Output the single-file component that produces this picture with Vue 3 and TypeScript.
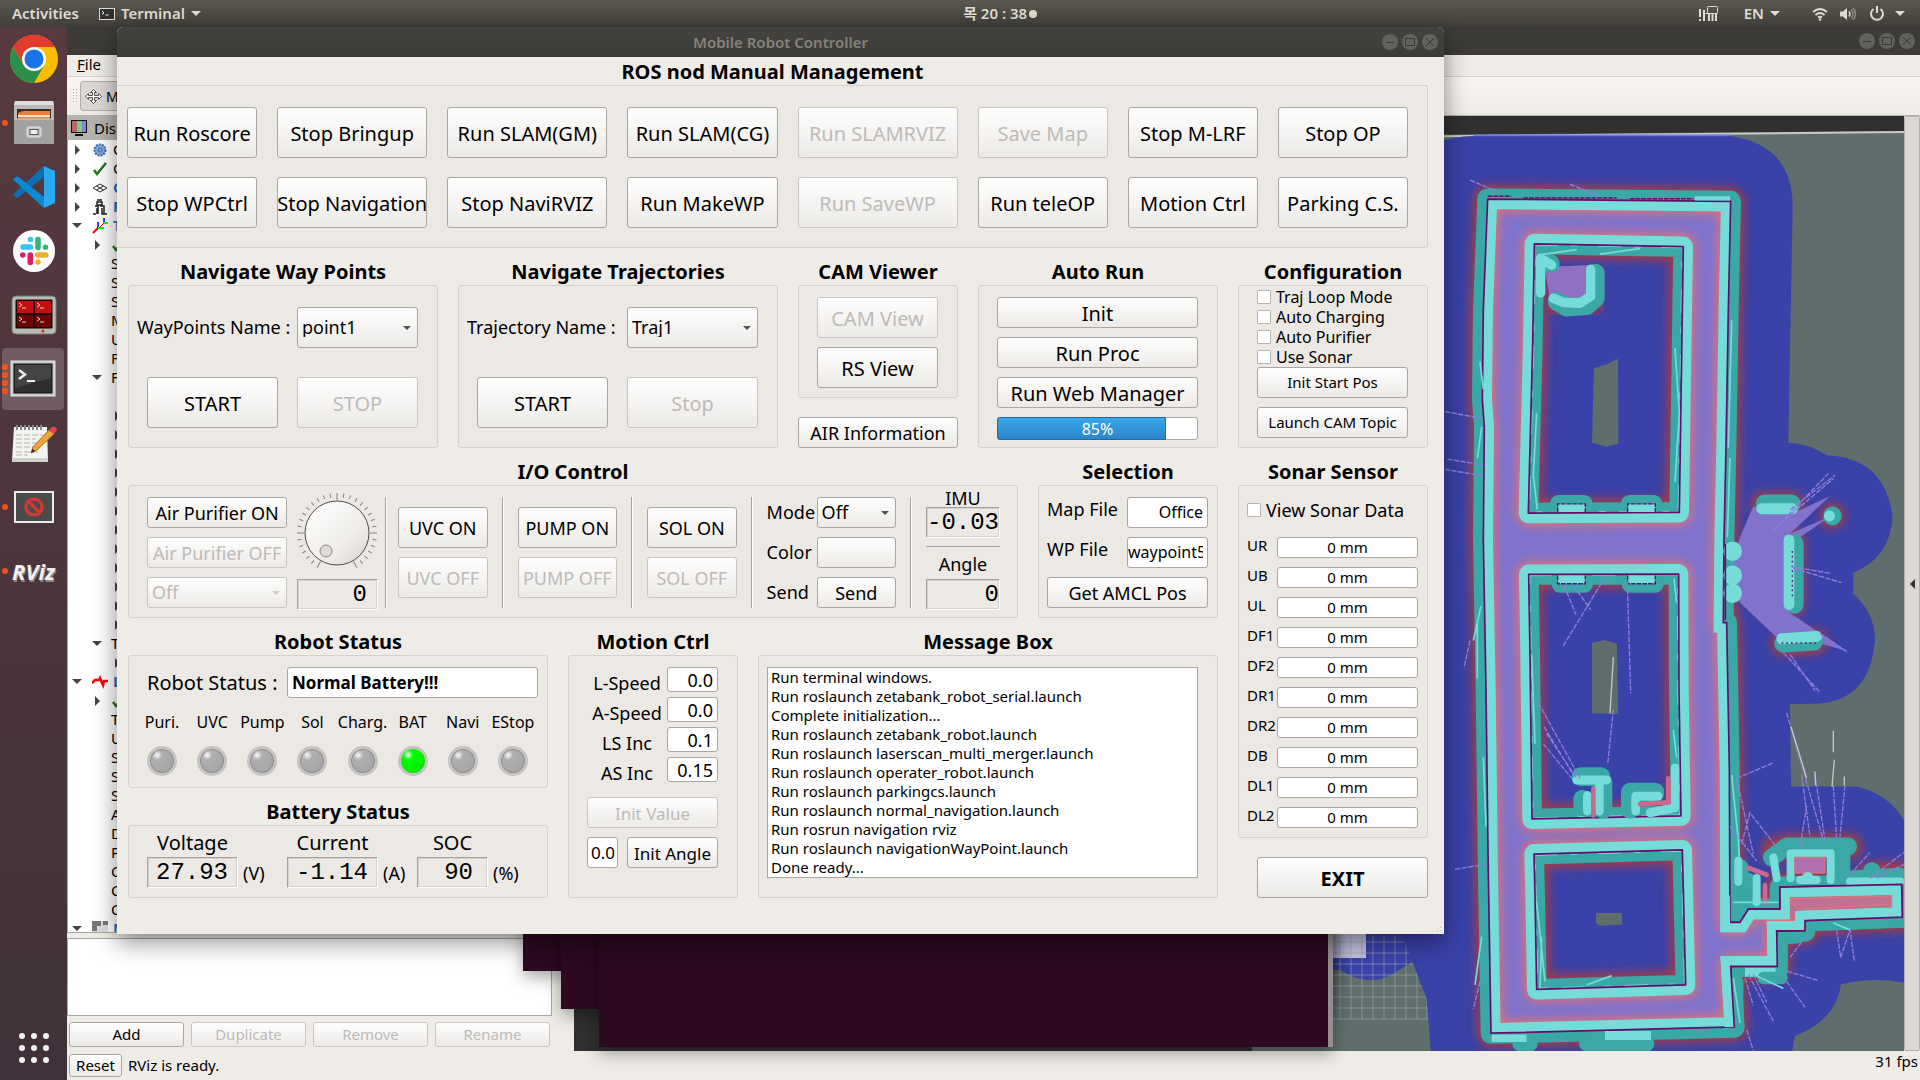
<script setup lang="ts">
import { reactive, ref } from 'vue'

interface Cmd { label: string; off?: boolean }

const commands: Cmd[] = [
  { label: 'Run Roscore' }, { label: 'Stop Bringup' }, { label: 'Run SLAM(GM)' }, { label: 'Run SLAM(CG)' },
  { label: 'Run SLAMRVIZ', off: true }, { label: 'Save Map', off: true }, { label: 'Stop M-LRF' }, { label: 'Stop OP' },
  { label: 'Stop WPCtrl' }, { label: 'Stop Navigation' }, { label: 'Stop NaviRVIZ' }, { label: 'Run MakeWP' },
  { label: 'Run SaveWP', off: true }, { label: 'Run teleOP' }, { label: 'Motion Ctrl' }, { label: 'Parking C.S.' },
]

const options = reactive([
  { label: 'Traj Loop Mode', on: false },
  { label: 'Auto Charging', on: false },
  { label: 'Auto Purifier', on: false },
  { label: 'Use Sonar', on: false },
])

const relays = ['UVC', 'PUMP', 'SOL']
const progress = ref(85)
const fan = ref(0)
const mapFile = ref('Office')
const wpFile = ref('waypoint5')
const viewSonar = ref(false)
const robotStatus = ref('Normal Battery!!!')
const initAngle = ref('0.0')

const sonar = reactive(['UR', 'UB', 'UL', 'DF1', 'DF2', 'DR1', 'DR2', 'DB', 'DL1', 'DL2'].map((id) => ({ id, value: '0 mm' })))
const lamps = ['Puri.', 'UVC', 'Pump', 'Sol', 'Charg.', 'BAT', 'Navi', 'EStop']
const battery = [
  { label: 'Voltage', value: '27.93', unit: '(V)' },
  { label: 'Current', value: '-1.14', unit: '(A)' },
  { label: 'SOC', value: '90', unit: '(%)' },
]
const motion = reactive([
  { label: 'L-Speed', value: '0.0' },
  { label: 'A-Speed', value: '0.0' },
  { label: 'LS Inc', value: '0.1' },
  { label: 'AS Inc', value: '0.15' },
])
const messages = ref([
  'Run terminal windows.',
  'Run roslaunch zetabank_robot_serial.launch',
  'Complete initialization...',
  'Run roslaunch zetabank_robot.launch',
  'Run roslaunch laserscan_multi_merger.launch',
  'Run roslaunch operater_robot.launch',
  'Run roslaunch parkingcs.launch',
  'Run roslaunch normal_navigation.launch',
  'Run rosrun navigation rviz',
  'Run roslaunch navigationWayPoint.launch',
  'Done ready...',
].join('\n'))

const ticks = Array.from({ length: 31 }, (_, i) => 120 + i * 10)

interface Row { text: string; kind: 'top' | 'display' | 'prop' | 'leaf'; icon?: string; arrow?: 'open' | 'shut' }
const props = (names: string): Row[] => names.split('').map((text): Row => ({ text, kind: 'prop' }))
const tree: Row[] = [
  { text: 'G', kind: 'top', icon: 'gear', arrow: 'shut' },
  { text: 'G', kind: 'top', icon: 'check', arrow: 'shut' },
  { text: 'G', kind: 'display', icon: 'grid', arrow: 'shut' },
  { text: 'R', kind: 'display', icon: 'robot', arrow: 'shut' },
  { text: 'T', kind: 'display', icon: 'axes', arrow: 'open' },
  { text: '', kind: 'prop', icon: 'check', arrow: 'shut' },
  ...props('SSSMUF'),
  { text: 'F', kind: 'prop', arrow: 'open' },
  { text: '', kind: 'prop' },
  ...Array.from({ length: 12 }, (): Row => ({ text: '', kind: 'leaf', arrow: 'shut' })),
  { text: 'T', kind: 'prop', arrow: 'open' },
  { text: '', kind: 'leaf', arrow: 'shut' },
  { text: 'L', kind: 'display', icon: 'scan', arrow: 'open' },
  { text: '', kind: 'prop', icon: 'check', arrow: 'shut' },
  ...props('TUSSSADPCCC'),
  { text: 'M', kind: 'display', icon: 'map', arrow: 'open' },
]

const outer = 'M203 578L932 585L925 900L918 1300L912 1568L910 1808L920 1808L928 2230L930 2678L960 2678L985 2640L1080 2640L1080 2576L1445 2568L1447 2663L1155 2673L1155 2703L1070 2703L1072 2806L932 2806L943 2982L213 3000L205 2540L198 2000L190 1568L193 1240L187 1160L190 900Z'
const rooms = [
  'M343 708L790 716L785 1030L778 1488L325 1490L338 1000Z',
  'M326 1668L776 1667L777 2000L783 2369L336 2378L330 1900Z',
  'M342 2480L787 2468L797 2860L350 2873L345 2600Z',
]
const holes = 'M522 1069L560 1058L594 1042L595 1288L560 1297L516 1285ZM516 1866L555 1858L591 1870L594 2073L516 2071ZM528 2651H606V2685L540 2688L528 2680Z'
</script>

<template>
  <div class="desktop">
    <header class="panel">
      <div class="panel-left">
        <button class="p-btn">Activities</button>
        <button class="p-btn app">
          <svg width="16" height="12" viewBox="0 0 16 12"><rect x=".5" y=".5" width="15" height="11" fill="#2f2f2d" stroke="#dfdbd2" /><path d="M3 3l2 2-2 1.500M6.500 7h3" fill="none" stroke="#fff" /></svg>
          Terminal <i class="caret"></i>
        </button>
      </div>
      <button class="p-btn clock">목 20 : 38<i class="dot"></i></button>
      <div class="panel-right">
        <svg width="19" height="16" viewBox="0 0 19 16" fill="none" stroke="#dfdbd2"><path d="M1 3v8M1 13v2M5 4v11M10 8v7M13.500 8v7M17 8v7" stroke-width="2" /><path d="M5 7.500h13" /><rect x="8.500" y=".5" width="10" height="7" rx="1" /></svg>
        <button class="p-btn en">EN <i class="caret"></i></button>
        <svg class="wifi" width="16" height="14" viewBox="0 0 16 14" fill="none" stroke="#dfdbd2" stroke-width="1.800"><path d="M1 5q7-6 14 0M3.500 8q4.500-4 9 0M6 10.500q2-1.500 4 0" /><circle cx="8" cy="12.500" r="1.300" fill="#dfdbd2" stroke="none" /></svg>
        <svg class="vol" width="16" height="14" viewBox="0 0 16 14" fill="none"><path d="M0 4.500h3L7 1v12L3 9.500H0z" fill="#dfdbd2" /><path d="M9 4.500q2 2.500 0 5" stroke="#dfdbd2" stroke-width="1.500" /><path d="M11 2.500q4 4.500 0 9M13 1q5 6 0 12" stroke="#8d8a83" stroke-width="1.500" /></svg>
        <svg class="pow" width="16" height="16" viewBox="0 0 16 16" fill="none" stroke="#dfdbd2" stroke-width="2"><path d="M8 0v7M4.500 3a6 6 0 1 0 7 0" /></svg>
        <i class="caret"></i>
      </div>
    </header>

    <div class="body">
      <nav class="dock">
        <button class="d-item" aria-label="Chrome">
          <svg width="48" height="48" viewBox="0 0 48 48"><circle cx="24" cy="24" r="24" fill="#fbbc05" /><path d="M3.200 12L13.600 30 24 36 34.400 30 24 48A24 24 0 0 1 3.200 12z" fill="#2a9048" /><path d="M24 12h20.800A24 24 0 0 0 3.200 12L13.600 30z" fill="#e33b2e" /><circle cx="24" cy="24" r="12" fill="#fff" /><circle cx="24" cy="24" r="9.500" fill="#1a73e8" /></svg>
        </button>
        <button class="d-item run" aria-label="Files">
          <svg width="42" height="44" viewBox="0 0 42 44"><path d="M2 0h38l1 5v38H1V5z" fill="#b9b9b7" /><path d="M2 0h38l1 4H1z" fill="#dededc" /><rect x="4" y="8" width="34" height="14" fill="#3a2a20" /><path d="M5 12q5-3 11-2h21v12H5z" fill="#e8803a" /><path d="M5 15h32" stroke="#fff" stroke-width="1.500" /><rect x="1" y="18" width="40" height="25" rx="1" fill="#a2a2a0" /><path d="M1 18h40" stroke="#cfcfcd" /><rect x="14" y="26" width="14" height="10" rx="2" fill="#c4c4c2" stroke="#e4e4e2" /><rect x="17" y="28.500" width="8" height="5" fill="#eee" stroke="#555" /></svg>
        </button>
        <button class="d-item" aria-label="Visual Studio Code">
          <svg width="42" height="42" viewBox="0 0 42 42"><path d="M31 0L0 28.500 3 31.500 5 31.500 31 11z" fill="#0f6fb4" /><path d="M31 42L0 13.500 3 10.500 5 10.500 31 31z" fill="#0b8ad4" /><path d="M31 0l11 5v32l-11 5z" fill="#2aa9f0" /></svg>
        </button>
        <button class="d-item" aria-label="Slack">
          <svg width="42" height="42" viewBox="0 0 42 42"><circle cx="21" cy="21" r="21" fill="#fff" /><g stroke-width="5.500" stroke-linecap="round"><path d="M17.500 9.500h0M10 17h7.500" stroke="#36c5f0" /><path d="M25 9.500v8M32.500 17.200h0" stroke="#2eb67d" /><path d="M24.800 25h8M25 32h0" stroke="#ecb22e" /><path d="M17.300 25v7.500M9.800 25h0" stroke="#e01e5a" /></g></svg>
        </button>
        <button class="d-item" aria-label="Terminator">
          <svg width="46" height="40" viewBox="0 0 46 40"><rect x="1" y="1" width="44" height="38" rx="4" fill="#b9bab4" stroke="#777a74" /><rect x="4.500" y="4.500" width="37" height="29" rx="1" fill="#1c0606" /><path d="M6 6h16v12H6zM24 6h16v12H24z" fill="#c31111" /><path d="M6 20h16v12H6zM24 20h16v12H24z" fill="#6d0505" /><path d="M8 8l3 2-3 2M11 13h4M26 8l3 2-3 2M29 13h4M8 22l3 2-3 2M11 27h4M26 22l3 2-3 2M29 27h4" fill="none" stroke="#f3c9c9" /><circle cx="32" cy="36" r="1.500" fill="#e22" /></svg>
        </button>
        <button class="d-item run active" aria-label="Terminal">
          <svg width="46" height="38" viewBox="0 0 46 38"><rect x="1" y="1" width="44" height="35" fill="#c9c9c7" stroke="#e6e6e4" /><rect x="4" y="4" width="38" height="29" fill="#2e2e2e" stroke="#111" /><path d="M5 5h36v13L5 28z" fill="#444" /><path d="M9 10l6 4.500L9 19" fill="none" stroke="#eee" stroke-width="2.500" /><path d="M17 21h8" stroke="#eee" stroke-width="2" /></svg>
          <b class="many"></b>
        </button>
        <button class="d-item" aria-label="Text Editor">
          <svg width="46" height="40" viewBox="0 0 46 40"><path d="M3 4h33l1 34H1z" fill="#f3f3f1" /><path d="M1 35h36v4H1z" fill="#d0d0cc" /><path d="M6 2v5M10 2v5M14 2v5M18 2v5M22 2v5M26 2v5M30 2v5" stroke="#888" stroke-width="2" /><path d="M5 12h27M5 16h20M5 20h25M5 24h18M5 29h22M5 32h12" stroke="#b5b5b0" stroke-dasharray="6 2" /><path d="M20 30l2-6L38 7l5 4L26 27z" fill="#f2a33c" stroke="#a86a1c" /><path d="M38 7l3-3q4-1 5 3l-3 4z" fill="#e2474c" /><path d="M20 30l1.500-4 2.500 2z" fill="#222" /></svg>
        </button>
        <button class="d-item run" aria-label="Application">
          <svg width="40" height="32" viewBox="0 0 40 32"><rect x="1" y="1" width="38" height="30" fill="#4b4b4b" stroke="#ececec" stroke-width="2" /><circle cx="20" cy="16" r="8" fill="none" stroke="#cf3a35" stroke-width="3.500" /><path d="M14.500 10.500l11 11" stroke="#cf3a35" stroke-width="3.500" /></svg>
        </button>
        <button class="d-item run rv">RViz</button>
        <button class="d-item apps" aria-label="Show Applications">
          <svg width="32" height="32" viewBox="0 0 32 32" fill="#f2f1f0"><template v-for="r in 3" :key="r"><circle v-for="c in 3" :key="c" :cx="c * 12 - 8" :cy="r * 12 - 8" r="3" /></template></svg>
        </button>
      </nav>

      <main class="work">
        <section class="rviz">
          <div class="r-title"><span class="wbtns"><i class="min"></i><i class="max"></i><i class="cls"></i></span></div>
          <div class="r-menu"><a href="#"><u>F</u>ile</a></div>
          <div class="r-tools">
            <i class="grip"></i>
            <button class="tool"><svg width="17" height="15" viewBox="0 0 17 15" fill="#fff" stroke="#555"><path d="M8.500.500l3 3h-2v3h4v-2l3 3-3 3v-2h-4v3h2l-3 3-3-3h2v-3h-4v2l-3-3 3-3v2h4v-3h-2z" /></svg>Mo</button>
          </div>
          <div class="r-body">
            <aside class="side">
              <div class="s-head"><svg width="16" height="16" viewBox="0 0 16 16"><rect width="16" height="13" fill="#111" /><path d="M1 1h5v11H1z" fill="#b66" /><path d="M6 1h5v11H6z" fill="#7c8" /><path d="M11 1h4v11h-4z" fill="#88c" /><path d="M4 15h8" stroke="#111" stroke-width="2" /></svg>Disp</div>
              <ul class="tree">
                <li v-for="(r, i) in tree" :key="i" :class="r.kind">
                  <i class="tw" :class="r.arrow"></i>
                  <svg v-if="r.icon" width="16" height="16" viewBox="0 0 16 16" fill="none">
                    <g v-if="r.icon === 'gear'"><circle cx="8" cy="8" r="5.500" fill="#7fa9dd" stroke="#3f6fae" stroke-width="2" stroke-dasharray="2 1" /><circle cx="8" cy="8" r="2" stroke="#3f6fae" /></g>
                    <path v-else-if="r.icon === 'check'" d="M2 9l3 4L14 2" stroke="#1d7a1d" stroke-width="2.500" />
                    <path v-else-if="r.icon === 'grid'" d="M1 8l7-4 7 4-7 4zM4.500 6l7 4M11.500 6l-7 4" stroke="#333" />
                    <path v-else-if="r.icon === 'robot'" d="M5 1h5M5 3h5v3H5zM3 7h3v8M8 7h4v8M5 15V9M10 9v6h5M1 15h3" stroke="#222" stroke-width="1.500" />
                    <g v-else-if="r.icon === 'axes'"><path d="M1 15l5-5" stroke="red" stroke-width="2" /><path d="M6 10V4M12 5V0" stroke="blue" stroke-width="1.500" /><path d="M6 10h6M11 5h5" stroke="lime" stroke-width="2" /><path d="M7 10l5-5" stroke="red" /></g>
                    <path v-else-if="r.icon === 'scan'" d="M0 9l3-3h4l1-2 3 7 1-4h4" stroke="red" stroke-width="2.500" />
                    <g v-else><path d="M0 0h16v16H0z" fill="#ddd" /><path d="M0 0h9v5H5v5H0zM11 0h5v4h-5zM9 12h7v4H9z" fill="#777" /></g>
                  </svg>
                  <span v-if="r.text">{{ r.text }}</span>
                </li>
              </ul>
              <div class="desc"></div>
              <div class="s-btns"><button>Add</button><button disabled>Duplicate</button><button disabled>Remove</button><button disabled>Rename</button></div>
            </aside>
            <div class="view">
              <svg viewBox="574 116 1330 935" preserveAspectRatio="xMaxYMin slice">
                <defs>
                  <filter id="glow" x="-20%" y="-20%" width="140%" height="140%"><feGaussianBlur stdDeviation="14" /></filter>
                  <clipPath id="cOut"><path :d="outer" /></clipPath>
                  <clipPath v-for="(r, i) in rooms" :id="'room' + i" :key="i"><path :d="r" /></clipPath>
                </defs>
                <path d="M574 116h1330v935H574z" fill="#303030" />
                <path d="M1252 1051V136L1904 131V1051z" fill="#5f6e6c" />
                <path d="M1252 138L1904 132" stroke="#c8c8c4" stroke-width="2" />
                <path d="M1333 900V970H1340Q1372 990 1399 970L1423 956 1424 980 1428 995 1431 1051H1500V900z" fill="#3a41a8" />
                <path d="M1333 900h33v58h-33z" fill="#c3c1e0" />
                <path d="M1340 935v84M1351 935v84M1362 935v84M1373 935v84M1384 935v84M1395 935v84M1406 935v84M1417 935v84M1427 935v84M1333 942h95M1333 953h95M1333 964h95M1333 975h95M1333 986h95M1333 997h95M1333 1008h95M1333 1019h95" stroke="#a3a8b4" stroke-opacity=".6" fill="none" />
                <g transform="translate(1420 0) scale(.33333 .34439)" fill="none">
                  <path d="M-60 490Q40 395 160 395H930Q1118 420 1118 600L1105 1285Q1170 1290 1222 1322Q1395 1330 1418 1500Q1410 1620 1300 1663V1725Q1365 1780 1365 1860Q1350 2030 1200 2043L1110 2045L1113 2284H1310Q1420 2310 1460 2400V2855Q1370 2835 1263 2858Q1250 2960 1125 3008L1115 3060H33L20 2900L-60 2700Z" fill="#3a41a8" />
                  <path d="M160 393H930" stroke="#7a74dc" stroke-width="5" />
                  <g filter="url(#glow)" stroke="#a83c3c" stroke-linejoin="round" stroke-linecap="round">
                    <path :d="outer" stroke-width="80" />
                    <path d="M1030 1465H1115M1237 1498h1M1117 1570V1755M1090 1868L1185 1862M1060 2470L1100 2460 1290 2458M1350 2540h90" stroke-width="72" />
                  </g>
                  <path d="M1000 1470L1110 1495 1230 1440 1110 1550 1230 1500 1110 1580V1780L1280 1890 1190 1865 1080 1860 960 1750 930 1650 960 1560Z" fill="#8173cc" />
                  <path :d="outer" stroke="#3aa8a6" stroke-width="62" stroke-linejoin="round" />
                  <path d="M300 3030h30M500 3030h180" stroke="#3aa8a6" stroke-width="46" stroke-linecap="round" />
                  <g clip-path="url(#cOut)">
                    <path :d="outer" fill="#8173cc" />
                    <g filter="url(#glow)" stroke="#e6706c" stroke-width="70" stroke-linejoin="round"><path :d="outer" /><path v-for="r in rooms" :key="r" :d="r" /></g>
                    <path :d="outer" stroke="#76dcda" stroke-width="58" />
                  </g>
                  <path :d="outer" stroke="#6a0a6e" stroke-width="5" />
                  <g stroke-linejoin="round">
                    <path v-for="r in rooms" :key="r" :d="r" stroke="#76dcda" stroke-width="58" fill="#3a41a8" />
                    <g v-for="(r, i) in rooms" :key="i" :clip-path="`url(#room${i})`">
                      <path :d="r" fill="#3a41a8" />
                      <path :d="r" stroke="#a03a48" stroke-width="84" filter="url(#glow)" />
                      <path :d="r" stroke="#3aa8a6" stroke-width="60" />
                      <path :d="r" stroke="#76dcda" stroke-width="10" stroke-dasharray="70 40 20 60" />
                    </g>
                    <path v-for="r in rooms" :key="'l' + r" :d="r" stroke="#6a0a6e" stroke-width="5" />
                  </g>
                  <path :d="holes" fill="#5f6e6c" />
                  <path d="M375 775L510 770V870H390Z" fill="#9070c4" />
                  <g stroke-linecap="round" stroke-linejoin="round">
                    <path d="M527 793V865L500 888 440 892 410 875" stroke="#a03a48" stroke-width="70" filter="url(#glow)" />
                    <path d="M375 775L510 770V870H390Z" fill="#9070c4" />
                    <path d="M390 765h2M527 793V865L500 888 440 892 410 875" stroke="#3aa8a6" stroke-width="54" />
                    <path d="M362 755V850M362 750L395 770M512 782V860L480 880 430 878 400 866" stroke="#76dcda" stroke-width="28" />
                    <path d="M415 1462h78M628 1462h74M420 1696h74M630 1696h76" stroke="#3aa8a6" stroke-width="50" />
                    <path d="M482 2255h62M487 2320V2340M550 2270V2350M630 2350V2300H706" stroke="#3aa8a6" stroke-width="54" />
                    <path d="M470 2265h90M502 2310V2355M538 2280V2355M647 2355V2312H715M690 2360L765 2345V2230" stroke="#76dcda" stroke-width="26" />
                    <path d="M520 2290V2368M660 2335L745 2330 745 2260" stroke="#c86a90" stroke-width="14" />
                  </g>
                  <path d="M413 1463h83v24h-83zM623 1463h83v24h-83zM413 1671h83v24h-83zM623 1671h83v24h-83zM215 3004h105v22H215zM555 2994h138v26H555zM825 570h105v12H825zM975 2810h108v26H975z" fill="#76dcda" />
                  <path d="M413 1487v-24h83v24M623 1487v-24h83v24M413 1671v24h83v-24M623 1671v24h83v-24M203 570h70M310 575h280M630 577h190" stroke="#6a0a6e" stroke-width="4" stroke-dasharray="14 3" />
                  <g stroke-linecap="round">
                    <path d="M1034 1463H1115M1237 1498h1M1124 1580V1755M1090 1868L1182 1862" stroke="#3aa8a6" stroke-width="54" />
                    <path d="M1025 1477H1118M1228 1498h1M1107 1568V1755M1085 1855L1190 1848" stroke="#76dcda" stroke-width="32" />
                    <path d="M938 1600v1M938 1670v1M938 1722v1" stroke="#76dcda" stroke-width="56" />
                  </g>
                  <path d="M1117 1600V1740M1085 1867H1190" stroke="#6a0a6e" stroke-width="4" stroke-dasharray="5 9" />
                  <path d="M916 1580V1800" stroke="#6a0a6e" stroke-width="5" />
                  <g stroke-linecap="round" stroke-linejoin="round">
                    <path d="M960 2520V2610M985 2560V2610M1055 2490L1100 2458H1285M1265 2470V2550M1300 2553L1440 2546M1355 2530h1" stroke="#3aa8a6" stroke-width="52" />
                    <path d="M1112 2550V2478H1232V2555M1060 2490L1070 2550M1010 2550V2620M1140 2555h50M955 2500V2560M1290 2560H1440" stroke="#76dcda" stroke-width="24" />
                    <path d="M1125 2490h90v45h-90z" fill="#b070b0" stroke="#d9707a" stroke-width="4" />
                    <path d="M1035 2570V2620M985 2520L1040 2540" stroke="#c86a90" stroke-width="14" />
                    <path d="M1145 2550a18 18 0 0 1 36 0z" fill="#76dcda" />
                    <path d="M1085 2730V2820M1030 2840H1085M1175 2690L1140 2720 1090 2725M1180 2685L1450 2675M952 2850V2960M960 2600V2660" stroke="#3aa8a6" stroke-width="36" />
                  </g>
                  <g clip-path="url(#cOut)">
                    <path d="M930 2600V2678H960L985 2640H1080V2576L1445 2568 1447 2663 1155 2673V2703H1070L1072 2806H932L943 2982" stroke="#76dcda" stroke-width="58" />
                  </g>
                  <path d="M1110 2610L1415 2602V2625L1130 2640z" fill="#c07092" stroke="#e07874" stroke-width="3" />
                  <path d="M930 2678L960 2678 985 2640H1080V2576L1445 2568 1447 2663 1155 2673V2703H1070L1072 2806H932L943 2982" stroke="#6a0a6e" stroke-width="5" />
                  <g stroke="#76dcda" stroke-width="5">
                    <path d="M360 740L470 725M540 738L660 722M350 1200L340 1380 352 1480M765 1010L778 1200 765 1400M770 1750L762 1680M335 1900L345 2160M760 2120L770 2200M350 2620L375 2850M365 2720L360 2870M500 2860L575 2833M935 930L925 1300M930 1330L922 1560M180 1050L190 1130M185 1240L172 1330M183 1760L160 1860M172 1800V1970M190 2200L198 2400M185 2720L165 2860M935 2250L955 2440 960 2520M940 2620H1075M940 2840L960 2970M980 2820L1090 2870M1240 2680L1290 2700" />
                  </g>
                  <g stroke="#8d7ddc" stroke-width="4">
                    <path d="M555 1676L428 1878M432 1700L468 1785M460 1700L512 1770M622 1690L632 2014M580 2060L563 2220M355 2040L480 2260M372 2110L460 2250M370 2160L455 2260M380 2130L470 2260M1110 1480L1245 1380M1060 1540L1225 1375M1080 1520L1240 1390M1115 1645L1230 1665M1120 1650L1265 1692M1090 1895L1200 2010M1110 1900L1185 2005M1200 1840L1280 1892M950 2260L1060 2215M950 2260L1000 2480M965 2450L990 2360 1070 2460M930 2400L1010 2500M1100 2070L1210 2440M1145 2250L1170 2430M1240 2280L1250 2440M1185 2250L1215 2440M1160 2340L1140 2460M1275 2280L1260 2430M1290 2540L1350 2475M1350 2550L1452 2475M1370 2550L1452 2510M1250 2700L1262 2780 1290 2700 1303 2790M1110 2780L1165 2710M1100 2820L1195 2847M1100 2850L1155 2925M985 2830L1060 2965M975 2840L1000 2920M1000 2830L1040 2910M980 2990L1000 3050M75 1195L185 1215M82 1333L190 1350M75 1363L190 1382M105 2524L195 2510M150 523L240 560M450 535L540 570M180 2850L160 2930M150 1860L132 1940" stroke-dasharray="16 4" />
                  </g>
                  <path d="M580 1908L570 2072M1113 2110L1160 2260M1240 2122V2184M1243 2206L1236 2285M1185 2240L1187 2280M1273 2255V2280" stroke="#c8c8bc" stroke-width="4" />
                </g>
              </svg>
            </div>
            <button class="fold" aria-label="Show panel"></button>
          </div>
          <div class="r-status"><button>Reset</button><span>RViz is ready.</span><span class="fps">31 fps</span></div>
        </section>

        <div class="term t1"></div>
        <div class="term t2"></div>
        <div class="term t3"></div>

        <section class="ctl">
          <div class="c-title">Mobile Robot Controller<span class="wbtns"><i class="min"></i><i class="max"></i><i class="cls"></i></span></div>
          <div class="c-body">
            <section class="grp first">
              <h2>ROS nod Manual Management</h2>
              <div class="frame cmds"><button v-for="c in commands" :key="c.label" :disabled="c.off"><span>{{ c.label }}</span></button></div>
            </section>

            <div class="row2">
              <section class="grp">
                <h2>Navigate Way Points</h2>
                <div class="frame nav">
                  <div class="nav-f"><label for="wp">WayPoints Name :</label><div class="sel"><select id="wp"><option>point1</option></select></div></div>
                  <div class="nav-b"><button>START</button><button disabled>STOP</button></div>
                </div>
              </section>
              <section class="grp">
                <h2>Navigate Trajectories</h2>
                <div class="frame nav even">
                  <div class="nav-f"><label for="tj">Trajectory Name :</label><div class="sel"><select id="tj"><option>Traj1</option></select></div></div>
                  <div class="nav-b"><button>START</button><button disabled>Stop</button></div>
                </div>
              </section>
              <section class="grp">
                <h2>CAM Viewer</h2>
                <div class="frame cam"><button disabled>CAM View</button><button>RS View</button></div>
                <button class="air">AIR Information</button>
              </section>
              <section class="grp">
                <h2>Auto Run</h2>
                <div class="frame auto">
                  <button>Init</button><button>Run Proc</button><button>Run Web Manager</button>
                  <div class="bar" role="progressbar" :aria-valuenow="progress"><i :style="{ width: progress + '%' }"></i><span>{{ progress }}%</span></div>
                </div>
              </section>
              <section class="grp">
                <h2>Configuration</h2>
                <div class="frame conf">
                  <label v-for="o in options" :key="o.label"><input v-model="o.on" type="checkbox">{{ o.label }}</label>
                  <button>Init Start Pos</button><button>Launch CAM Topic</button>
                </div>
              </section>
            </div>

            <div class="lower">
              <div class="left">
                <div class="row3">
                  <section class="grp">
                    <h2>I/O Control</h2>
                    <div class="frame io">
                      <div class="pur">
                        <button>Air Purifier ON</button><button disabled>Air Purifier OFF</button>
                        <div class="sel off"><select aria-label="Purifier level" disabled><option>Off</option></select></div>
                      </div>
                      <div class="dialc">
                        <div class="dial">
                          <svg width="80" height="80" viewBox="-40 -40 80 80">
                            <defs><linearGradient id="knob" x1="0" y1="0" x2="1" y2="1"><stop offset="0" stop-color="#fff" /><stop offset=".6" stop-color="#f0eeeb" /><stop offset="1" stop-color="#d8d4cf" /></linearGradient></defs>
                            <path v-for="(t, i) in ticks" :key="t" :d="i % 15 === 0 || t === 180 || t === 360 ? 'M33 0H40' : 'M36 0H40'" :transform="`rotate(${t})`" stroke="#85827e" />
                            <circle r="32" fill="url(#knob)" stroke="#4e4c49" stroke-width="1" />
                            <circle cx="-11" cy="18" r="6" fill="#dedbd7" stroke="#8c8985" />
                          </svg>
                          <input v-model="fan" type="range" min="0" max="100" aria-label="Fan speed">
                        </div>
                        <output class="lcd">{{ fan }}</output>
                      </div>
                      <template v-for="(r, i) in relays" :key="r">
                        <i class="sep" :class="{ near: i === 0 }"></i>
                        <div class="relay" :class="{ wide: i === 1 }"><button>{{ r }} ON</button><button disabled>{{ r }} OFF</button></div>
                      </template>
                      <i class="sep"></i>
                      <div class="mode">
                        <label for="md">Mode</label><div class="sel"><select id="md"><option>Off</option></select></div>
                        <span>Color</span><button aria-label="Color"></button>
                        <span>Send</span><button>Send</button>
                      </div>
                      <i class="sep"></i>
                      <div class="imu"><span>IMU</span><output class="lcd">-0.03</output><hr><span>Angle</span><output class="lcd">0</output></div>
                    </div>
                  </section>
                  <section class="grp">
                    <h2>Selection</h2>
                    <div class="frame pick">
                      <label for="mf">Map File</label><div class="field"><input id="mf" v-model="mapFile"></div>
                      <label for="wf">WP File</label><div class="field"><input id="wf" v-model="wpFile"></div>
                      <button>Get AMCL Pos</button>
                    </div>
                  </section>
                </div>
                <div class="row4">
                  <div class="stat">
                    <section class="grp">
                      <h2>Robot Status</h2>
                      <div class="frame robot">
                        <div class="rs"><label for="rs">Robot Status :</label><input id="rs" v-model="robotStatus"></div>
                        <div class="lamps"><div v-for="l in lamps" :key="l"><span>{{ l }}</span><i :class="{ on: l === 'BAT' }"></i></div></div>
                      </div>
                    </section>
                    <section class="grp">
                      <h2>Battery Status</h2>
                      <div class="frame batt">
                        <div v-for="b in battery" :key="b.label"><span class="bl">{{ b.label }}</span><output class="lcd">{{ b.value }}</output><span class="un">{{ b.unit }}</span></div>
                      </div>
                    </section>
                  </div>
                  <section class="grp">
                    <h2>Motion Ctrl</h2>
                    <div class="frame motion">
                      <div v-for="(m, i) in motion" :key="m.label" class="mrow"><label :for="'m' + i">{{ m.label }}</label><input :id="'m' + i" v-model="m.value"></div>
                      <button class="iv" disabled>Init Value</button>
                      <div class="ia"><input v-model="initAngle" aria-label="Angle"><button>Init Angle</button></div>
                    </div>
                  </section>
                  <section class="grp">
                    <h2>Message Box</h2>
                    <div class="frame msg"><textarea v-model="messages" aria-label="Messages" spellcheck="false"></textarea></div>
                  </section>
                </div>
              </div>
              <div class="right">
                <section class="grp">
                  <h2>Sonar Sensor</h2>
                  <div class="frame son">
                    <label class="vs"><input v-model="viewSonar" type="checkbox">View Sonar Data</label>
                    <div v-for="s in sonar" :key="s.id" class="srow"><label :for="s.id">{{ s.id }}</label><input :id="s.id" v-model="s.value"></div>
                  </div>
                </section>
                <button class="exit">EXIT</button>
              </div>
            </div>
            <i class="size-grip"></i>
          </div>
        </section>
      </main>
    </div>
  </div>
</template>

<style>
body { margin: 0; }
</style>

<style scoped>
* { box-sizing: border-box; }
.desktop { height: 100vh; display: flex; flex-direction: column; overflow: hidden; background: #efece7; color: #000; font: 15px/19px "Noto Sans", "Noto Sans CJK KR", sans-serif; }
button, input, select, textarea { font: inherit; color: inherit; margin: 0; }
button { white-space: nowrap; }

/* top panel */
.panel { height: 27px; flex: none; display: grid; grid-template-columns: 12fr auto 11fr; align-items: center; color: #dfdbd2; background: linear-gradient(#5b584f, #403e39); font-weight: 600; font-size: 15px; }
.p-btn { background: none; border: 0; padding: 0; display: flex; align-items: center; }
.panel-left { display: flex; padding-left: 12px; gap: 20px; }
.app { gap: 6px; }
.caret { border: 5px solid transparent; border-top-color: #dfdbd2; border-bottom: 0; }
.dot { width: 8px; height: 8px; border-radius: 50%; background: #dfdbd2; margin-left: 2px; }
.panel-right { display: flex; align-items: center; justify-content: flex-end; padding-right: 15px; }
.en { gap: 6px; margin: 0 32px 0 26px; }
.wifi { margin-right: 12px; }
.vol { margin-right: 13px; }
.pow { margin-right: 10px; }

/* dock */
.body { flex: 1; min-height: 0; display: flex; }
.dock { width: 67px; flex: none; display: flex; flex-direction: column; background: linear-gradient(#563a3f, #4a343c 60%, #40323a); }
.d-item { height: 64px; flex: none; border: 0; background: none; padding: 0; display: flex; align-items: center; justify-content: center; position: relative; }
.d-item.run::before { content: ""; position: absolute; left: 2px; top: 29px; width: 6px; height: 6px; border-radius: 50%; background: #e95420; }
.d-item.active { margin: 1px 3px 1px 2px; height: 62px; border-radius: 4px; background: #715b62; }
.d-item.active::before { display: none; }
.many { position: absolute; left: 0; top: 15px; width: 6px; height: 32px; background: radial-gradient(circle at 3px 4px, #e95420 3px, transparent 3px) 0 0 / 6px 8px; }
.rv { color: #f0f0f0; font: italic 700 22px/30px "Open Sans", sans-serif; text-shadow: 1px 2px #888; }
.apps { margin-top: auto; }

/* rviz */
.work { flex: 1; position: relative; display: flex; min-height: 0; }
.rviz { flex: 1; display: flex; flex-direction: column; min-width: 0; min-height: 0; }
.r-title { height: 28px; flex: none; background: #3c3b37; display: flex; justify-content: flex-end; align-items: center; padding-right: 5px; }
.wbtns { display: flex; gap: 4px; }
.wbtns i { width: 16px; height: 16px; border-radius: 50%; background: #63615b; display: grid; place-items: center; }
.wbtns i::before { content: ""; border: 1px solid #3a3935; }
.wbtns .min::before { width: 8px; height: 0; border-width: 1px 0 0; }
.wbtns .max::before { width: 8px; height: 6px; }
.wbtns .cls::before { width: 8px; height: 8px; border: 0; background: linear-gradient(45deg, transparent 45%, #3a3935 45% 55%, transparent 55%), linear-gradient(135deg, transparent 45%, #3a3935 45% 55%, transparent 55%); }
.r-menu { height: 22px; flex: none; padding-left: 10px; border-bottom: 1px solid #d3cfca; }
.r-menu a { color: #000; text-decoration: none; }
.r-tools { height: 39px; flex: none; display: flex; align-items: center; padding-left: 5px; gap: 3px; background: linear-gradient(#f8f6f2, #efece7); border-bottom: 1px solid #b5b1ac; }
.grip { width: 5px; height: 16px; background: radial-gradient(circle, #b5b1ac 1px, transparent 1px) 0 0 / 3px 3px; }
.tool { width: 125px; height: 30px; display: flex; align-items: center; gap: 4px; padding: 0 4px; background: #dbd8d4; border: 1px solid #b0aca7; border-radius: 3px; font-size: 14px; }
.r-body { flex: 1; display: flex; min-height: 0; }
.side { width: 485px; flex: none; display: flex; flex-direction: column; min-height: 0; }
.s-head { height: 24px; flex: none; display: flex; align-items: center; gap: 7px; padding-left: 4px; background: #b7b3ae; }
.tree { margin: 0; padding: 0; list-style: none; flex: 1; min-height: 0; background: #fff; border: 1px solid #aaa6a1; border-top: 0; overflow: hidden; }
.tree li { height: 19px; display: flex; align-items: center; white-space: nowrap; }
.tree li svg { flex: none; }
.tw { width: 10px; height: 10px; flex: none; margin: 0 10px 0 4px; display: grid; place-items: center; }
.tw.shut::before { content: ""; border: 5px solid transparent; border-left-color: #444; border-right: 0; }
.tw.open::before { content: ""; border: 5px solid transparent; border-top-color: #444; border-bottom: 0; }
.tree span { margin-left: 5px; }
.display span { color: #2a6fb8; font-weight: 700; }
.prop .tw { margin: 0 9px 0 24px; }
.prop span { margin-left: 0; }
.leaf .tw { margin: 0 0 0 44px; }
.desc { height: 78px; margin-top: 5px; flex: none; background: #fff; border: 1px solid #aaa6a1; }
.s-btns { height: 35px; flex: none; display: flex; gap: 7px; padding: 6px 2px 4px; }
.s-btns button { flex: 1; }
.view { flex: 1; margin-left: 22px; position: relative; overflow: hidden; background: #303030; }
.view svg { position: absolute; width: 100%; height: 100%; display: block; }
.fold { width: 16px; padding: 0; border: 1px solid #b5b1ac; border-radius: 2px; background: #dcd9d5; display: grid; place-items: center; }
.fold::before { content: ""; border: 5px solid transparent; border-right-color: #333; border-left: 0; }
.r-status { height: 29px; flex: none; display: flex; align-items: center; padding: 0 2px; gap: 6px; }
.r-status button { width: 53px; height: 23px; padding: 0; }
.fps { margin: -8px 0 0 auto; }

/* terminals behind the controller */
.term { position: absolute; background: #2d0922; box-shadow: 0 6px 16px rgba(0, 0, 0, .35); right: 587px; top: 400px; }
.t1 { left: 456px; bottom: 109px; }
.t2 { left: 494px; bottom: 71px; }
.t3 { left: 532px; bottom: 33px; border-right: 5px solid #968d90; }

/* controller window */
.ctl { position: absolute; left: 50px; right: 476px; top: 0; font-size: 20px; background: #efece7; border-radius: 6px 6px 0 0; box-shadow: 0 8px 24px rgba(0, 0, 0, .45); }
.c-title { height: 30px; position: relative; border-radius: 6px 6px 0 0; background: linear-gradient(#45433e, #3c3b37); color: #85827a; font-weight: 600; font-size: 15px; line-height: 30px; text-align: center; }
.c-title .wbtns { position: absolute; right: 6px; top: 7px; }
.c-body { padding: 2px 16px 36px 0; display: flex; flex-direction: column; gap: 11px; }
.c-body h2 { margin: 0; font-size: 20px; font-weight: 700; line-height: 26px; text-align: center; white-space: nowrap; }
.frame { border: 1px solid #d5d1cc; border-radius: 3px; background: #ece9e4; }
.ctl button, .sel select, .s-btns button, .r-status button { border: 1px solid #aaa6a2; border-radius: 3px; background: linear-gradient(#fefefe, #eceae7); }
.ctl button { padding: 2px 0 0; height: 31px; display: flex; justify-content: center; align-items: center; overflow: hidden; min-width: 0; }
button:disabled, select:disabled { color: #bdbbb8; border-color: #c9c6c2; opacity: 1; }
.ctl button:disabled, .s-btns button:disabled, .sel select:disabled { border-color: #c9c6c2; }
.ctl input:not([type]) { border: 1px solid #aaa6a2; border-radius: 3px; background: #fff; min-width: 0; width: 100%; padding: 0 4px; text-align: right; }
.sel { position: relative; min-width: 0; }
.sel select { appearance: none; width: 100%; height: 100%; padding: 0 4px; }
.sel::after { content: ""; position: absolute; right: 7px; top: 50%; margin-top: -2px; border: 4px solid transparent; border-top-color: #55534f; border-bottom: 0; }
.sel.off::after { border-top-color: #d0cdca; }
input[type="checkbox"] { appearance: none; width: 14px; height: 14px; flex: none; background: #fff; border: 1px solid #b9b5b0; border-radius: 1px; }
.lcd { display: block; height: 31px; border: 1px solid; border-color: #a5a19c #fff #fff #a5a19c; outline: 1px solid #d5d1cc; outline-offset: -2px; font: 24px/29px "Liberation Mono", monospace; text-align: right; padding-right: 10px; }

.first .frame { border-left: 0; border-radius: 0 3px 3px 0; }
.cmds { height: 163px; padding: 21px 19px 0 10px; display: grid; grid-template-columns: 130fr 150fr 160fr 150fr 160fr 130fr 130fr 130fr; gap: 19px 20px; align-content: start; }
.ctl .cmds button { height: 51px; }

.row2 { padding-left: 11px; display: grid; grid-template-columns: 310fr 320fr 160fr 240fr 190fr; gap: 20px; }
.grp { min-width: 0; }
.row2 .frame { height: 163px; }
.nav { padding: 21px 19px 0 8px; white-space: nowrap; }
.nav-f { display: grid; grid-template-columns: 160fr 121fr; height: 41px; align-items: center; font-size: 18px; }
.nav-f .sel { height: 41px; }
.nav-b { display: grid; grid-template-columns: 131fr 121fr; gap: 19px; margin: 29px 0 0 10px; }
.even .nav-f { grid-template-columns: 160fr 131fr; }
.even .nav-b { grid-template-columns: 131fr 131fr; }
.ctl .nav-b button { height: 51px; }
.row2 .cam { height: 113px; padding: 11px 19px 0 18px; display: grid; gap: 9px; align-content: start; }
.ctl .cam button { height: 41px; }
.ctl .air { width: 100%; margin-top: 19px; font-size: 18px; }
.auto { padding: 11px 19px 0 18px; display: grid; gap: 9px; align-content: start; }
.bar { height: 23px; position: relative; background: #fff; border: 1px solid #aaa6a2; border-radius: 3px; text-align: center; font-size: 16px; line-height: 22px; color: #fff; }
.bar i { position: absolute; left: -1px; top: -1px; height: 23px; background: linear-gradient(#3ba6ea, #2a86c9); border: 1px solid #24699c; border-radius: 3px 0 0 3px; }
.bar span { position: relative; }
.conf { padding: 1px 19px 0 18px; font-size: 16px; display: flex; flex-direction: column; }
.conf label { height: 20px; display: flex; align-items: center; gap: 5px; white-space: nowrap; }
.ctl .conf button { margin-bottom: 9px; flex: none; font-size: 15px; padding: 0; }

.lower { padding-left: 11px; display: grid; grid-template-columns: 1090fr 190fr; gap: 20px; }
.left { display: flex; flex-direction: column; gap: 11px; min-width: 0; }
.row3 { display: grid; grid-template-columns: 890fr 180fr; gap: 20px; }
.row3 .frame { height: 133px; }
.io { display: flex; padding: 11px 17px 0 18px; font-size: 18px; white-space: nowrap; }
.pur { flex: 141 1 141px; display: grid; gap: 9px; align-content: start; margin-right: 10px; }
.pur .sel { height: 31px; }
.dialc { flex: 81 1 81px; margin-top: -4px; }
.dial { position: relative; height: 80px; margin-bottom: 6px; }
.dial svg { display: block; }
.dial input { position: absolute; inset: 0; width: 80px; height: 80px; margin: 0; opacity: 0; }
.sep { width: 2px; height: 111px; flex: none; margin: 0 14px; border-left: 1px solid #a5a19c; border-right: 1px solid #fff; }
.sep.near { margin: 0 11px 0 7px; }
.relay { flex: 90 1 90px; display: grid; gap: 9px; align-content: start; padding-top: 10px; }
.relay.wide { flex: 100 1 100px; }
.ctl .relay button { height: 41px; }
.mode { flex: 130 1 130px; display: grid; grid-template-columns: 50px 1fr; gap: 9px 0; align-content: start; align-items: center; }
.mode .sel { height: 31px; }
.imu { flex: 72 1 72px; text-align: center; margin-top: -8px; }
.imu > span { display: block; height: 18px; line-height: 18px; }
.imu .lcd { padding-right: 0; }
.imu hr { border: 0; border-top: 1px solid #a5a19c; margin: 8px 0; }
.imu hr + span { height: 24px; }
.pick { padding: 11px 9px 0 8px; display: grid; grid-template-columns: 80fr 81fr; gap: 9px 0; align-content: start; font-size: 18px; white-space: nowrap; }
.field { height: 31px; display: flex; justify-content: flex-end; overflow: hidden; }
.ctl .pick input { font-size: 16px; padding: 0 4px 0 0; }
.pick button { grid-column: 1 / 3; }
.pick label { line-height: 25px; }

.row4 { display: grid; grid-template-columns: 420fr 170fr 460fr; gap: 20px; }
.stat { display: flex; flex-direction: column; gap: 11px; min-width: 0; }
.robot { height: 133px; padding: 11px 9px 0 8px; }
.rs { display: grid; grid-template-columns: 140fr 251fr; padding-left: 10px; align-items: center; white-space: nowrap; }
.ctl .rs input { height: 31px; text-align: left; font-weight: 700; font-size: 17px; }
.lamps { display: grid; grid-template-columns: repeat(8, 1fr); font-size: 16px; margin-top: 15px; }
.lamps div { display: flex; flex-direction: column; align-items: center; gap: 14px; white-space: nowrap; min-width: 0; }
.lamps i { width: 30px; height: 30px; border-radius: 50%; border: 3px solid #c6c4c2; background: radial-gradient(circle at 30% 25%, #eee 1px, #b0b0b0 5px, #a2a2a2 22px); box-shadow: inset 0 0 0 1px #8c8c8c; }
.lamps i.on { background: radial-gradient(circle at 30% 25%, #cfc 1px, #0f0 5px, #00e600 22px); box-shadow: none; }
.batt { height: 73px; padding: 3px 0 0 18px; display: flex; }
.batt div { display: grid; grid-template-columns: 91px 49px; grid-template-rows: 28px 31px; text-align: center; }
.batt div:nth-child(2) { grid-template-columns: 91px 39px; }
.batt div:nth-child(3) { grid-template-columns: 71px 40px; }
.bl { grid-column: 1 / 2; line-height: 28px; }
.batt .lcd { grid-area: 2 / 1; padding-right: 9px; }
.batt div:nth-child(3) .lcd { padding-right: 14px; }
.un { grid-area: 2 / 2; line-height: 33px; text-align: left; padding-left: 5px; font-size: 18px; }
.motion { height: 243px; padding: 11px 19px 0 18px; font-size: 18px; }
.mrow { display: grid; grid-template-columns: 80fr 51fr; grid-template-rows: 25px; height: 25px; margin-bottom: 5px; text-align: center; white-space: nowrap; }
.mrow label { line-height: 32px; }
.mrow input { height: 25px; }
.ctl .motion .iv { width: 100%; margin: 15px 0 9px; }
.ia { display: grid; grid-template-columns: 31fr 91fr; gap: 9px; }
.ctl .motion .iv, .ctl .ia button, .ctl .ia input { font-size: 17px; }
.ctl .ia input { padding: 0 2px; }
.msg { height: 243px; padding: 11px 19px 0 8px; }
.msg textarea { display: block; width: 100%; height: 211px; resize: none; overflow: hidden; border: 1px solid #aaa6a2; background: #fff; padding: 0 3px; font-size: 15px; line-height: 19px; white-space: pre; }
.right { min-width: 0; }
.son { padding: 11px 9px 0 8px; font-size: 15px; white-space: nowrap; }
.vs { display: flex; gap: 5px; height: 26px; align-items: center; font-size: 18px; margin-bottom: 14px; }
.srow { display: grid; grid-template-columns: 30fr 141fr; height: 21px; margin-bottom: 9px; }
.srow label { line-height: 17px; }
.ctl .srow input { text-align: center; }
.ctl .exit { width: calc(100% - 19px); margin: 19px 0 0 19px; height: 41px; font-weight: 700; }
.size-grip { position: absolute; right: 1px; bottom: 1px; width: 10px; height: 10px; background: radial-gradient(circle, #b5b1ac 1px, transparent 1px) 0 0 / 3px 3px; clip-path: polygon(100% 0, 100% 100%, 0 100%); }
</style>
